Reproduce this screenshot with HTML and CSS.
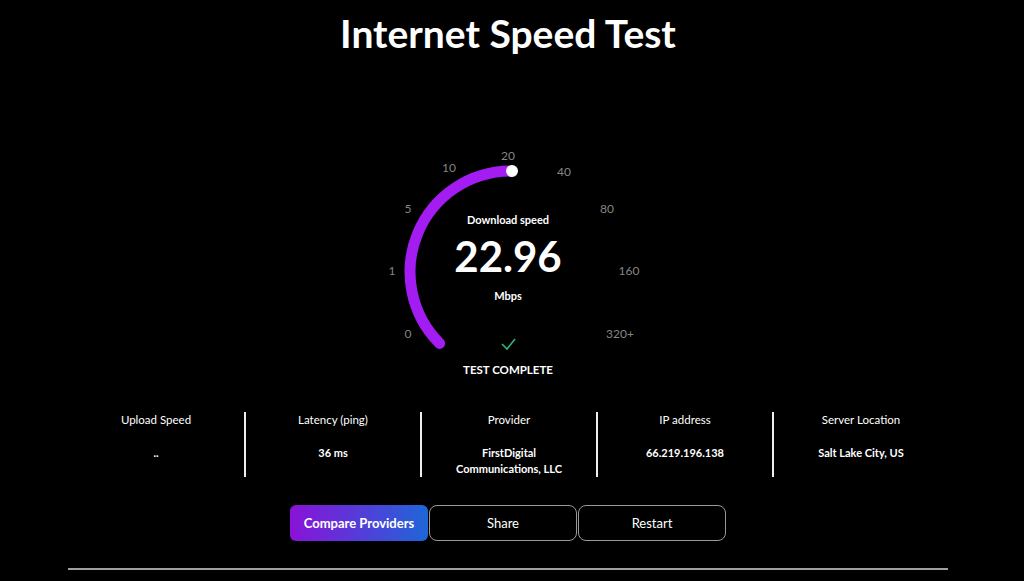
FILE: index.html
```html
<!DOCTYPE html>
<html lang="en">
<head>
    <meta charset="UTF-8" />
    <meta name="viewport" content="width=device-width, initial-scale=1.0" />
    <title>Internet Speed Test</title>
    <link rel="stylesheet" href="styles.css">
</head>
<body>
    <h1 class="title">Internet Speed Test</h1>

    <section class="gauge">
        <svg class="gauge-svg" width="300" height="218" viewBox="0 0 300 218">
            <g transform="translate(3,0)">
                <g class="ticks">
                    <text x="47" y="191">0</text>
                    <text x="31" y="128">1</text>
                    <text x="47" y="66">5</text>
                    <text x="88" y="25">10</text>
                    <text x="147" y="13">20</text>
                    <text x="203" y="29">40</text>
                    <text x="246" y="66">80</text>
                    <text x="268" y="128">160</text>
                    <text x="259" y="191">320+</text>
                </g>
                <path class="arc" d="M78.6 201.4 A101 101 0 0 1 150 29" />
                <circle cx="151" cy="29" r="6" fill="#fff" />
                <path class="check" d="M141 202 L146 207 L154 197" />
            </g>
        </svg>
        <div class="readout">
            <div class="readout-label">Download speed</div>
            <div class="readout-value">22.96</div>
            <div class="readout-unit">Mbps</div>
        </div>
    </section>
    <p class="status">TEST COMPLETE</p>

    <div class="stats">
        <div class="stat">
            <div class="stat-label">Upload Speed</div>
            <div class="stat-value">..</div>
        </div>
        <div class="stat">
            <div class="stat-label">Latency (ping)</div>
            <div class="stat-value">36 ms</div>
        </div>
        <div class="stat">
            <div class="stat-label">Provider</div>
            <div class="stat-value">FirstDigital<br>Communications, LLC</div>
        </div>
        <div class="stat">
            <div class="stat-label">IP address</div>
            <div class="stat-value">66.219.196.138</div>
        </div>
        <div class="stat">
            <div class="stat-label">Server Location</div>
            <div class="stat-value">Salt Lake City, US</div>
        </div>
    </div>

    <div class="actions">
        <button class="btn btn-primary">Compare Providers</button>
        <button class="btn">Share</button>
        <button class="btn">Restart</button>
    </div>

    <hr class="divider">
</body>
</html>
```

FILE: styles.css
```css
body { margin: 0; padding-right: 8px; background: #000; color: #fff; font-family: Lato, "Open Sans", sans-serif; text-align: center; }
.title { margin: 0; padding-top: 9px; font-size: 39px; line-height: 48px; font-weight: 700; }
.gauge { position: relative; width: 300px; height: 218px; margin: 85px auto 0; }
.gauge-svg { display: block; }
.ticks text { font-size: 12px; fill: #858585; text-anchor: middle; dominant-baseline: central; }
.arc { fill: none; stroke: #a31cf2; stroke-width: 11; stroke-linecap: round; }
.check { fill: none; stroke: #2fb67c; stroke-width: 1.6; }
.readout { position: absolute; left: 0; right: 0; top: 70px; }
.readout-label { font-size: 11px; font-weight: 700; line-height: 16px; }
.readout-value { font-size: 42px; font-weight: 700; line-height: 46px; margin-top: 5px; }
.readout-unit { font-size: 11px; font-weight: 700; line-height: 16px; margin-top: 9px; }
.status { margin: 0; font-size: 11.5px; font-weight: 700; line-height: 20px; }
.stats { display: grid; grid-template-columns: repeat(5, 1fr); width: 880px; margin: 32px auto 0; }
.stat { border-left: 2px solid #eee; }
.stat:first-child { border-left: none; }
.stat-label { font-size: 11.5px; line-height: 16px; }
.stat-value { font-size: 11px; font-weight: 700; line-height: 16px; margin-top: 17px; }
.actions { display: flex; justify-content: center; gap: 1px; margin-top: 28px; }
.btn { height: 36px; width: 148px; background: #000; color: #fff; border: 1px solid #999; border-radius: 8px; font-family: inherit; font-size: 13px; cursor: pointer; }
.btn-primary { width: 138px; border: none; border-radius: 6px; font-weight: 700; background: linear-gradient(90deg, #8a12d8, #1f66d8); }
.divider { width: 880px; margin: 27px auto 0; border: none; border-top: 2px solid #a0a0a0; }
```
